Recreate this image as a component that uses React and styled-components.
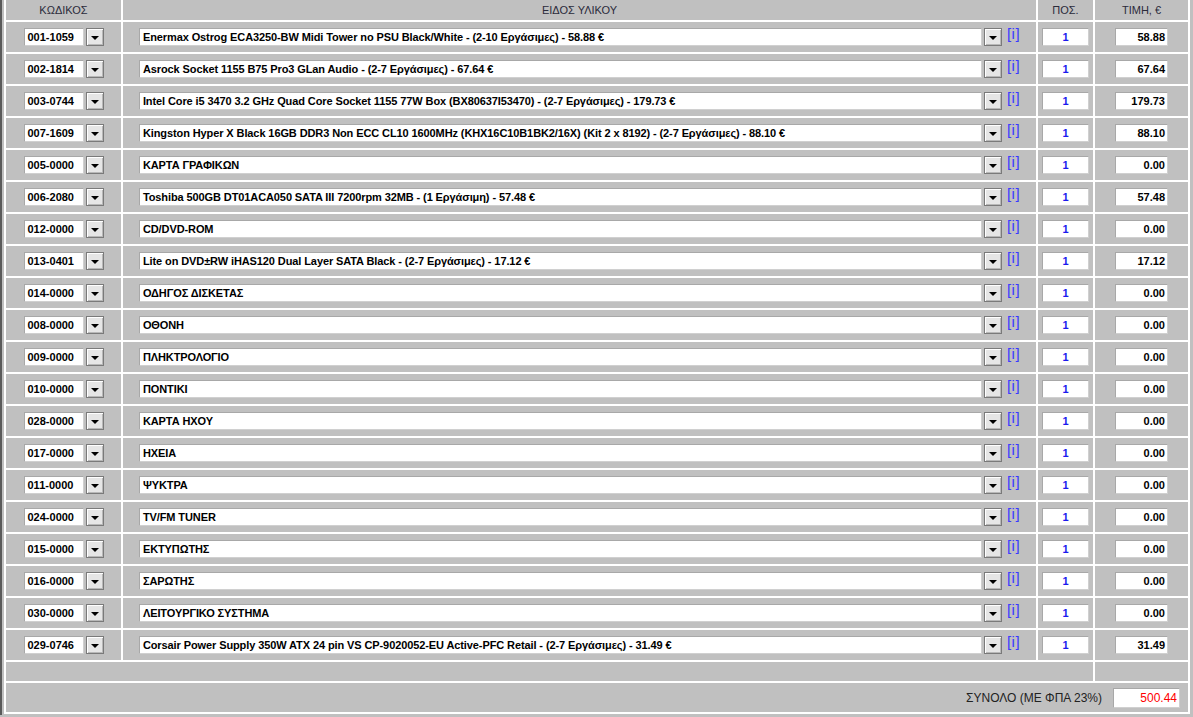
import React from "react";
import styled, { createGlobalStyle } from "styled-components";

const GlobalStyle = createGlobalStyle`
  html, body {
    margin: 0;
    padding: 0;
    background: #c0c0c0;
    overflow: hidden;
  }
  body {
    font-family: "Liberation Sans", Arial, sans-serif;
  }
`;

const rows = [
  ["001-1059", "Enermax Ostrog ECA3250-BW Midi Tower no PSU Black/White - (2-10 Εργάσιμες) - 58.88 €", "58.88"],
  ["002-1814", "Asrock Socket 1155 B75 Pro3 GLan Audio - (2-7 Εργάσιμες) - 67.64 €", "67.64"],
  ["003-0744", "Intel Core i5 3470 3.2 GHz Quad Core Socket 1155 77W Box (BX80637I53470) - (2-7 Εργάσιμες) - 179.73 €", "179.73"],
  ["007-1609", "Kingston Hyper X Black 16GB DDR3 Non ECC CL10 1600MHz (KHX16C10B1BK2/16X) (Kit 2 x 8192) - (2-7 Εργάσιμες) - 88.10 €", "88.10"],
  ["005-0000", "ΚΑΡΤΑ ΓΡΑΦΙΚΩΝ", "0.00"],
  ["006-2080", "Toshiba 500GB DT01ACA050 SATA III 7200rpm 32MB - (1 Εργάσιμη) - 57.48 €", "57.48"],
  ["012-0000", "CD/DVD-ROM", "0.00"],
  ["013-0401", "Lite on DVD±RW iHAS120 Dual Layer SATA Black - (2-7 Εργάσιμες) - 17.12 €", "17.12"],
  ["014-0000", "ΟΔΗΓΟΣ ΔΙΣΚΕΤΑΣ", "0.00"],
  ["008-0000", "ΟΘΟΝΗ", "0.00"],
  ["009-0000", "ΠΛΗΚΤΡΟΛΟΓΙΟ", "0.00"],
  ["010-0000", "ΠΟΝΤΙΚΙ", "0.00"],
  ["028-0000", "ΚΑΡΤΑ ΗΧΟΥ", "0.00"],
  ["017-0000", "ΗΧΕΙΑ", "0.00"],
  ["011-0000", "ΨΥΚΤΡΑ", "0.00"],
  ["024-0000", "TV/FM TUNER", "0.00"],
  ["015-0000", "ΕΚΤΥΠΩΤΗΣ", "0.00"],
  ["016-0000", "ΣΑΡΩΤΗΣ", "0.00"],
  ["030-0000", "ΛΕΙΤΟΥΡΓΙΚΟ ΣΥΣΤΗΜΑ", "0.00"],
  ["029-0746", "Corsair Power Supply 350W ATX 24 pin VS CP-9020052-EU Active-PFC Retail - (2-7 Εργάσιμες) - 31.49 €", "31.49"],
];

const Page = styled.div`
  border-left: 2px solid #5a5a5a;
  height: 717px;
  padding-left: 2px;
  box-sizing: border-box;
`;

const Table = styled.table`
  border-collapse: separate;
  border-spacing: 2px;
  background: #ffffff;
  margin-top: -2px;
  width: 1186px;
  table-layout: fixed;
`;

const Head = styled.th`
  background: #c0c0c0;
  height: 20px;
  padding: 0;
  font-weight: normal;
  font-size: 11px;
  color: #2b2b3b;
  text-align: center;
  width: ${(p) => p.$w}px;
`;

const Cell = styled.td`
  background: #c0c0c0;
  height: ${(p) => p.$h || 30}px;
  padding: 0 ${(p) => p.$pr || 0}px 0 0;
  text-align: ${(p) => p.$align || "center"};
  vertical-align: middle;
`;

const Group = styled.div`
  display: flex;
  align-items: flex-start;
  justify-content: center;
`;

const Field = styled.div`
  box-sizing: border-box;
  width: ${(p) => p.$w}px;
  height: 18px;
  background: #fff;
  border: 1px solid #a8a8a8;
  border-right-color: #d0d0d0;
  border-bottom-color: #d0d0d0;
  font-size: 11px;
  font-weight: bold;
  color: #000;
  line-height: 16px;
  padding: 0 3px;
  letter-spacing: ${(p) => p.$ls || 0}px;
  white-space: nowrap;
  overflow: hidden;
  text-align: left;
`;

const DropButton = styled.div`
  box-sizing: border-box;
  width: 18px;
  height: 18px;
  margin-left: 2px;
  border: 1px solid #7a7a7a;
  background: #e6e6e6;
  box-shadow: inset 1px 1px 0 #ffffff, inset -1px -1px 0 #b8b8b8;
  display: flex;
  align-items: center;
  justify-content: center;
`;

const Arrow = styled.span`
  width: 0;
  height: 0;
  border-left: 4px solid transparent;
  border-right: 4px solid transparent;
  border-top: 4px solid #000;
  margin-top: 2px;
`;

const Info = styled.a`
  margin-left: 5px;
  margin-top: -3px;
  font-size: 15px;
  line-height: 17px;
  letter-spacing: 0.5px;
  color: #3a3aff;
  text-decoration: none;
  cursor: pointer;
`;

const Box = styled.div`
  box-sizing: border-box;
  display: inline-block;
  width: ${(p) => p.$w}px;
  height: ${(p) => p.$h || 18}px;
  background: #fff;
  border: 1px solid #a8a8a8;
  border-right-color: #d0d0d0;
  border-bottom-color: #d0d0d0;
  font-size: ${(p) => p.$fs || 11}px;
  font-weight: ${(p) => p.$weight || "bold"};
  color: ${(p) => p.$color || "#000"};
  line-height: ${(p) => (p.$h || 18) - 2}px;
  text-align: ${(p) => p.$align || "center"};
  padding: 0 2px;
  vertical-align: middle;
`;

const TotalLabel = styled.span`
  font-size: 12px;
  color: #222;
  margin-right: 11px;
  vertical-align: middle;
`;

const Select = ({ value, width, spacing }) => (
  <>
    <Field $w={width} $ls={spacing}>{value}</Field>
    <DropButton>
      <Arrow />
    </DropButton>
  </>
);

export default function App() {
  return (
    <Page>
      <GlobalStyle />
      <Table>
        <thead>
          <tr>
            <Head $w={115}>ΚΩΔΙΚΟΣ</Head>
            <Head $w={913}>ΕΙΔΟΣ ΥΛΙΚΟΥ</Head>
            <Head $w={55}>ΠΟΣ.</Head>
            <Head $w={93}>ΤΙΜΗ, €</Head>
          </tr>
        </thead>
        <tbody>
          {rows.map(([code, name, price]) => (
            <tr key={code}>
              <Cell>
                <Group>
                  <Select value={code} width={60} />
                </Group>
              </Cell>
              <Cell>
                <Group>
                  <Select value={name} width={843} spacing={-0.1} />
                  <Info>[i]</Info>
                </Group>
              </Cell>
              <Cell>
                <Box $w={47} $color="#1a1aee">1</Box>
              </Cell>
              <Cell>
                <Box $w={53} $align="right">{price}</Box>
              </Cell>
            </tr>
          ))}
          <tr>
            <Cell colSpan={3} $h={19} />
            <Cell $h={19} />
          </tr>
          <tr>
            <Cell colSpan={4} $h={29} $align="right" $pr={8}>
              <TotalLabel>ΣΥΝΟΛΟ (ΜΕ ΦΠΑ 23%)</TotalLabel>
              <Box $w={67} $h={20} $fs={12} $weight="normal" $color="#ff0000" $align="right">
                500.44
              </Box>
            </Cell>
          </tr>
        </tbody>
      </Table>
    </Page>
  );
}
